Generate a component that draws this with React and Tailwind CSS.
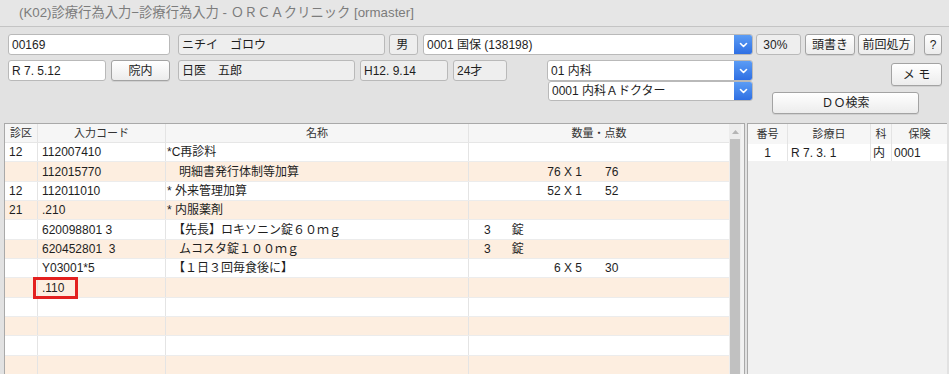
import React from "react";

const font = "font-['Liberation_Sans','Noto_Sans_CJK_JP',sans-serif]";

function Chevron() {
  return (
    <svg width="9" height="6" viewBox="0 0 9 6" fill="none">
      <path d="M1.5 1.5 L4.5 4.5 L7.5 1.5" stroke="white" strokeWidth="1.6" strokeLinecap="round" strokeLinejoin="round" />
    </svg>
  );
}

function Field({ w, value, readOnly }) {
  return (
    <div
      className={`${w} h-[21px] flex items-center px-[3px] border border-[#b9b9b9] rounded-[3px] text-[12px] text-[#1e1e1e] whitespace-pre ${
        readOnly ? "bg-[#eeeeee]" : "bg-white"
      }`}
    >
      {value}
    </div>
  );
}

function Button({ w, h = "h-[21px]", label }) {
  return (
    <button className={`${w} ${h} flex items-center justify-center border border-[#a3a3a3] rounded-[3px] bg-gradient-to-b from-white to-[#ececec] text-[12px] text-[#1e1e1e] shadow-[0_1px_0_rgba(0,0,0,0.08)] whitespace-pre`}>
      {label}
    </button>
  );
}

function Select({ w, h = "h-[21px]", value }) {
  return (
    <div className={`${w} ${h} flex border border-[#b9b9b9] rounded-[3px] bg-white overflow-hidden`}>
      <div className="flex-1 flex items-center px-[3px] text-[12px] text-[#1e1e1e] whitespace-pre">{value}</div>
      <div className="w-[18px] flex items-center justify-center bg-gradient-to-b from-[#5b9cf5] to-[#2f6fe3]">
        <Chevron />
      </div>
    </div>
  );
}

const rows = [
  { ku: "12", code: "112007410", name: "*C再診料" },
  { ku: "", code: "112015770", name: "　明細書発行体制等加算", qty: "76 X 1", pt: "76" },
  { ku: "12", code: "112011010", name: "* 外来管理加算", qty: "52 X 1", pt: "52" },
  { ku: "21", code: ".210", name: "* 内服薬剤" },
  { ku: "", code: "620098801 3", name: "　【先長】ロキソニン錠６０ｍｇ", n: "3", unit: "錠" },
  { ku: "", code: "620452801  3", name: "　ムコスタ錠１００ｍｇ", n: "3", unit: "錠" },
  { ku: "", code: "Y03001*5", name: "　【１日３回毎食後に】", qty: "6 X 5", pt: "30" },
  { ku: "", code: ".110", name: "", mark: true },
  { ku: "", code: "", name: "" },
  { ku: "", code: "", name: "" },
  { ku: "", code: "", name: "" },
  { ku: "", code: "", name: "" },
];

export default function App() {
  return (
    <div className={`${font} w-[949px] h-[374px] bg-[#e2e2e2] flex flex-col overflow-hidden`}>
      {/* Title */}
      <div className="h-[27px] shrink-0 flex items-center pl-[19px] bg-[#e6e6e6] border-b border-[#c4c4c4] text-[13.3px] text-[#7c7c7c]">
        (K02)診療行為入力−診療行為入力 - ＯＲＣＡクリニック [ormaster]
      </div>

      {/* Form */}
      <div className="h-[96px] shrink-0 flex pt-[7px]">
        <div className="w-[745px] ml-[8px] flex flex-col">
          <div className="flex">
            <Field w="w-[162px]" value="00169" />
            <div className="w-[8px]" />
            <Field w="w-[207px]" value="ニチイ　ゴロウ" readOnly />
            <div className="w-[4px]" />
            <Field w="w-[29px]" value=" 男" readOnly />
            <div className="w-[5px]" />
            <Select w="w-[330px]" value="0001 国保 (138198)" />
          </div>
          <div className="flex mt-[5px]">
            <Field w="w-[98px]" value="R 7. 5.12" />
            <div className="w-[5px]" />
            <Button w="w-[59px]" label="院内" />
            <div className="w-[8px]" />
            <Field w="w-[177px]" value="日医　五郎" readOnly />
            <div className="w-[5px]" />
            <Field w="w-[88px]" value="H12. 9.14" readOnly />
            <div className="w-[5px]" />
            <Field w="w-[54px]" value="24才" readOnly />
            <div className="w-[40px]" />
            <Select w="w-[206px]" value="01 内科" />
          </div>
          <div className="flex pl-[540px]">
            <Select w="w-[205px]" h="h-[20px]" value="0001 内科Ａドクター" />
          </div>
        </div>
        <div className="flex-1 flex flex-col ml-[3px]">
          <div className="flex">
            <Field w="w-[45px]" value=" 30%" readOnly />
            <div className="w-[4px]" />
            <Button w="w-[50px]" label="頭書き" />
            <div className="w-[3px]" />
            <Button w="w-[57px]" label="前回処方" />
            <div className="w-[9px]" />
            <Button w="w-[18px]" label="?" />
          </div>
          <div className="flex justify-end pr-[7px] mt-[8px]">
            <Button w="w-[51px]" h="h-[23px]" label="メ モ" />
          </div>
          <div className="flex pl-[16px] mt-[6px]">
            <Button w="w-[147px]" h="h-[22px]" label="ＤＯ検索" />
          </div>
        </div>
      </div>

      {/* Tables */}
      <div className="flex-1 flex pl-[4px] pr-[2px] min-h-0">
        {/* Main table */}
        <div className="w-[741px] flex border-t border-l border-[#a9a9a9] bg-white">
          <div className="w-[725px] flex flex-col">
            <div className="h-[19px] shrink-0 flex bg-[#f6f6f6] border-b border-[#e6e6e6] text-[11px] text-[#333]">
              <div className="w-[33px] flex items-center justify-center border-r border-[#e4e4e4]">診区</div>
              <div className="w-[128px] flex items-center justify-center border-r border-[#e4e4e4]">入力コード</div>
              <div className="w-[303px] flex items-center justify-center border-r border-[#e4e4e4]">名称</div>
              <div className="flex-1 flex items-center justify-center">数量・点数</div>
            </div>
            {rows.map((r, i) => (
              <div
                key={i}
                className={`h-[19.35px] shrink-0 flex border-b border-[#ececec] text-[12px] text-[#1e1e1e] ${
                  i % 2 === 0 ? "bg-white" : "bg-[#fdeee0]"
                }`}
              >
                <div className="w-[33px] flex items-center pl-[4px] border-r border-[#e4e4e4]">{r.ku}</div>
                <div className="w-[128px] relative flex items-center pl-[4px] border-r border-[#e4e4e4] whitespace-pre">
                  {r.code}
                  {r.mark && (
                    <div className="absolute left-[-5px] top-[-1px] w-[45px] h-[22px] border-[3px] border-[#e3201f]" />
                  )}
                </div>
                <div className="w-[303px] flex items-center pl-[1px] border-r border-[#e4e4e4] whitespace-pre">{r.name}</div>
                <div className="flex-1 flex items-center whitespace-pre">
                  {r.qty && (
                    <>
                      <span className="w-[113px] text-right">{r.qty}</span>
                      <span className="ml-[23px]">{r.pt}</span>
                    </>
                  )}
                  {r.n && (
                    <>
                      <span className="ml-[15px]">{r.n}</span>
                      <span className="ml-[21px]">{r.unit}</span>
                    </>
                  )}
                </div>
              </div>
            ))}
          </div>
          {/* Scrollbar */}
          <div className="w-[12px] flex flex-col bg-[#ececec]">
            <div className="h-[15px] flex items-center justify-center">
              <svg width="7" height="4" viewBox="0 0 7 4">
                <path d="M0 4 L3.5 0 L7 4 Z" fill="#b4b4b4" />
              </svg>
            </div>
            <div className="flex-1 bg-[#c1c1c1] mx-[1px]" />
          </div>
          <div className="w-[4px] bg-[#f2f2f2] border-r border-[#a9a9a9]" />
        </div>

        {/* History table */}
        <div className="flex-1 ml-[2px] flex flex-col border-t border-l border-[#a9a9a9] bg-[#f1f1f1]">
          <div className="h-[20px] flex bg-[#f6f6f6] text-[11px] text-[#333]">
            <div className="w-[40px] flex items-center justify-center border-r border-[#e4e4e4]">番号</div>
            <div className="w-[83px] flex items-center justify-center border-r border-[#e4e4e4]">診療日</div>
            <div className="w-[21px] flex items-center justify-center border-r border-[#e4e4e4]">科</div>
            <div className="flex-1 flex items-center justify-center">保険</div>
          </div>
          <div className="h-[17px] flex bg-white text-[12px] text-[#1e1e1e]">
            <div className="w-[40px] flex items-center justify-center border-r border-[#e4e4e4]">1</div>
            <div className="w-[83px] flex items-center pl-[3px] border-r border-[#e4e4e4] whitespace-pre">R 7. 3. 1</div>
            <div className="w-[21px] flex items-center pl-[2px] border-r border-[#e4e4e4]">内</div>
            <div className="flex-1 flex items-center pl-[2px]">0001</div>
          </div>
        </div>
      </div>
    </div>
  );
}
